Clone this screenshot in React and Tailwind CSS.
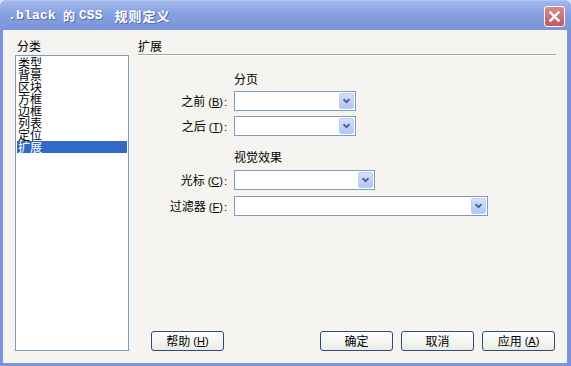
function Chevron() {
  return (
    <svg width="9" height="6" viewBox="0 0 9 6">
      <path d="M1.5 1.2 L4.5 4.2 L7.5 1.2" stroke="#4a5f87" strokeWidth="1.8" fill="none" />
    </svg>
  );
}

function Select({ className }) {
  return (
    <div className={"h-[20px] border border-[#7f9db9] bg-white flex items-center justify-end pr-px " + className}>
      <div className="w-[15px] h-[16px] rounded-[2px] border border-[#bccdf5] bg-linear-to-b from-[#d3e0fd] to-[#b2c6f5] flex items-center justify-center">
        <Chevron />
      </div>
    </div>
  );
}

function Key({ k }) {
  return (
    <span className="font-['Liberation_Sans',sans-serif] text-[11px] ml-[3px]">
      (<span className="underline">{k}</span>)
    </span>
  );
}

function Label({ text, k }) {
  return (
    <div className="text-right leading-[20px] h-[20px] whitespace-nowrap">
      {text}
      <Key k={k} />
      <span className="font-['Liberation_Sans',sans-serif] text-[11px] ml-px">:</span>
    </div>
  );
}

function Btn({ children }) {
  return (
    <button className="w-[73px] h-[20px] rounded-[3px] border border-[#2c4c7c] bg-linear-to-b from-white to-[#ebeae4] text-[12px] leading-none flex items-center justify-center text-black">
      {children}
    </button>
  );
}

function Row({ className, children }) {
  return <div className={"grid grid-cols-[89px_auto] gap-x-[7px] items-center " + className}>{children}</div>;
}

export default function App() {
  const items = ["类型", "背景", "区块", "方框", "边框", "列表", "定位", "扩展"];
  return (
    <div className="w-[571px] h-[366px] bg-[#dfe3ef] font-['Noto_Sans_CJK_SC','Liberation_Sans',sans-serif] text-[12px] text-black">
      <div className="w-full h-full flex flex-col rounded-t-[7px] bg-[#7b93dc] overflow-hidden">
        {/* title bar */}
        <div className="h-[30px] shrink-0 flex items-center justify-between pl-[8px] pr-[6px] bg-linear-to-b from-[#a1b7ec] via-[#859ede] to-[#7c95da] border-t border-[#b3c6f1]">
          <div className="flex items-center text-white font-bold [text-shadow:1px_1px_0_#5469ad] mt-[1px]">
            <span className="font-['Liberation_Mono',monospace] text-[13px] tracking-[0.2px]">.black</span>
            <span className="ml-[7px] text-[12px]">的</span>
            <span className="ml-[4px] font-['Liberation_Mono',monospace] text-[13px]">CSS</span>
            <span className="ml-[12px] text-[13px] tracking-[1px]">规则定义</span>
          </div>
          <div className="w-[21px] h-[21px] rounded-[3px] border border-white bg-linear-to-b from-[#d88a8f] to-[#bf5a63] flex items-center justify-center mt-[2px]">
            <svg width="13" height="13" viewBox="0 0 13 13">
              <path d="M2.5 2.5 L10.5 10.5 M10.5 2.5 L2.5 10.5" stroke="white" strokeWidth="2.4" strokeLinecap="square" />
            </svg>
          </div>
        </div>
        {/* body */}
        <div className="flex-1 ml-[3px] mr-[4px] mb-[3px] bg-[#f5f4f0] flex pt-[10px] pl-[12px] pr-[11px] pb-[12px] gap-[9px]">
          {/* left column */}
          <div className="w-[114px] flex flex-col">
            <div className="leading-[12px] h-[12px] pl-[2px]">分类</div>
            <div className="mt-[3px] flex-1 border border-[#7f9db9] bg-white p-px">
              {items.map((t, i) => (
                <div
                  key={t}
                  className={
                    i === items.length - 1
                      ? "h-[12px] leading-[12px] pl-px bg-[#316ac5] text-white"
                      : "h-[12px] leading-[12px] pl-px"
                  }
                >
                  {t}
                </div>
              ))}
            </div>
          </div>
          {/* right column */}
          <div className="flex-1 flex flex-col">
            <div className="leading-[12px] h-[12px]">扩展</div>
            <div className="mt-[2px] border-t border-[#aca899] border-b border-b-white" />
            <Row className="mt-[17px]">
              <div />
              <div className="leading-[12px] h-[12px]">分页</div>
            </Row>
            <Row className="mt-[6px]">
              <Label text="之前" k="B" />
              <Select className="w-[122px]" />
            </Row>
            <Row className="mt-[5px]">
              <Label text="之后" k="T" />
              <Select className="w-[122px]" />
            </Row>
            <Row className="mt-[15px]">
              <div />
              <div className="leading-[12px] h-[12px]">视觉效果</div>
            </Row>
            <Row className="mt-[7px]">
              <Label text="光标" k="C" />
              <Select className="w-[141px]" />
            </Row>
            <Row className="mt-[6px]">
              <Label text="过滤器" k="F" />
              <Select className="w-[254px]" />
            </Row>
            <div className="mt-auto flex items-end pl-[13px] pr-px">
              <Btn>帮助<Key k="H" /></Btn>
              <div className="ml-auto flex gap-[8px]">
                <Btn>确定</Btn>
                <Btn>取消</Btn>
                <Btn>应用<Key k="A" /></Btn>
              </div>
            </div>
          </div>
        </div>
      </div>
    </div>
  );
}
